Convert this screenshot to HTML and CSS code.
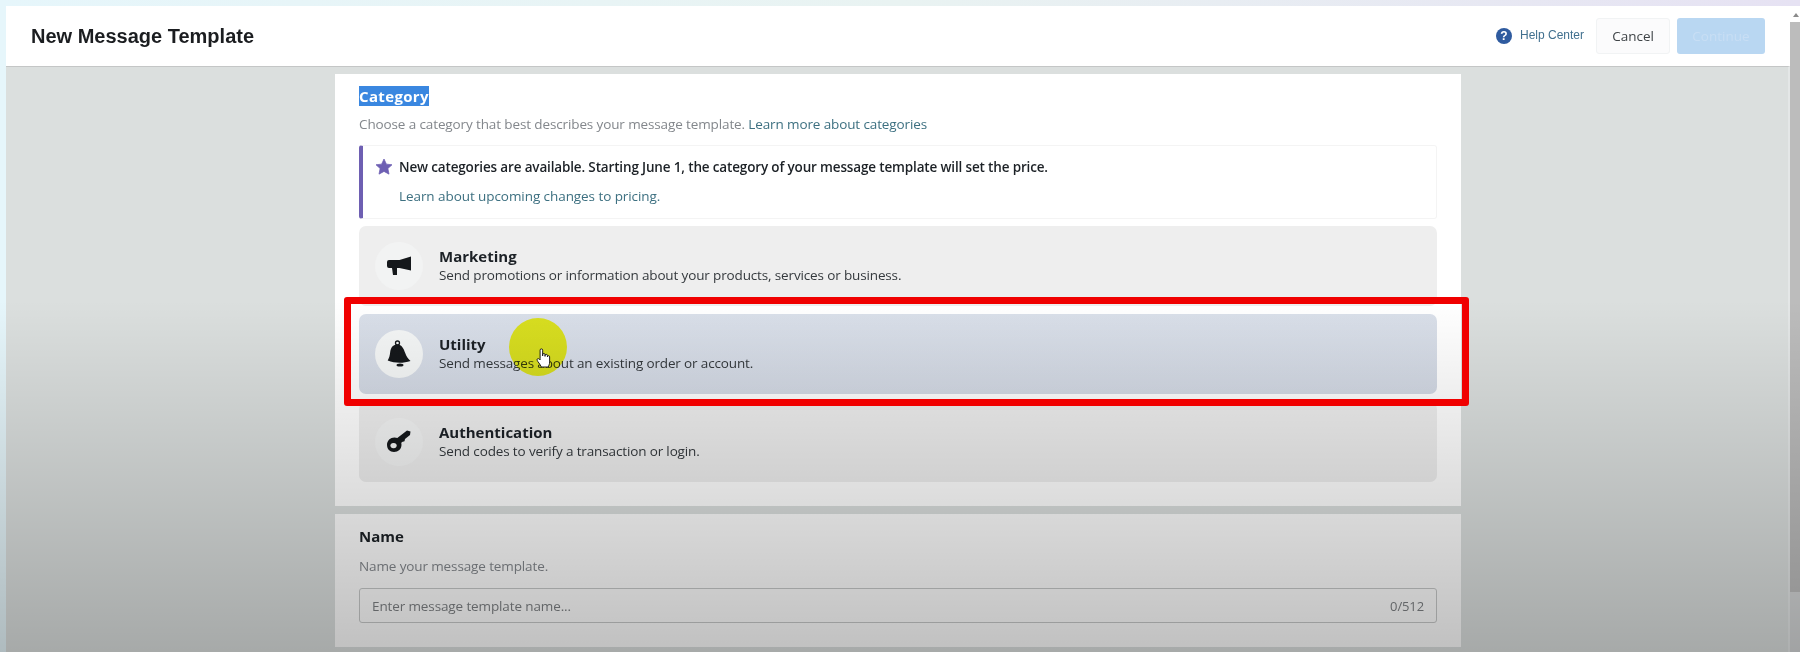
FILE: index.html
```html
<!DOCTYPE html>
<html lang="en">
<head>
<meta charset="utf-8">
<title>New Message Template</title>
<link rel="stylesheet" href="styles.css">
</head>
<body>
<div class="shell">
  <div class="app">
    <header class="header">
      <h1 class="title">New Message Template</h1>
      <div class="actions">
        <a class="help"><span class="help-icon">?</span><span class="help-text">Help Center</span></a>
        <button class="btn btn-cancel">Cancel</button>
        <button class="btn btn-continue">Continue</button>
      </div>
    </header>
    <main class="main">
      <section class="card card-category">
        <h2 class="heading heading-category"><span class="selected">Category</span></h2>
        <p class="sub sub-category">Choose a category that best describes your message template. <a class="link">Learn more about categories</a></p>
        <div class="notice">
          <div class="notice-line">
            <svg class="star" viewBox="0 0 16 16"><path d="M8 1.600l1.900 4.100 4.500.5-3.300 3 .9 4.500L8 11.500l-4 2.200.9-4.500-3.300-3 4.500-.5z"/></svg>
            <span class="notice-text">New categories are available. Starting June 1, the category of your message template will set the price.</span>
          </div>
          <a class="link notice-link">Learn about upcoming changes to pricing.</a>
        </div>
        <div class="options">
          <div class="option">
            <span class="option-icon"><svg viewBox="0 0 48 48"><path d="M14 18h10.500L36 14.500V28.500L24.500 26H14a2 2 0 0 1-2-2v-4a2 2 0 0 1 2-2z"/><path d="M17 26h5v7h-4z"/></svg></span>
            <div class="option-copy"><div class="option-name">Marketing</div><div class="option-desc">Send promotions or information about your products, services or business.</div></div>
          </div>
          <div class="option option-active">
            <span class="option-icon"><svg viewBox="0 0 48 48"><circle class="ring" cx="22.500" cy="13" r="2"/><path d="M22 14.500c-4.500.3-6.300 3.500-6.800 7.500-.4 3.500-1 6-2.500 8.500 7 2.800 15.300 3 22.800.5-2.500-2.500-4-4.500-5.300-8-1.500-4.500-3.500-8.800-8.200-8.500z"/><ellipse cx="25" cy="35" rx="3.500" ry="1.600"/></svg></span>
            <div class="option-copy"><div class="option-name">Utility</div><div class="option-desc">Send messages about an existing order or account.</div></div>
          </div>
          <div class="option">
            <span class="option-icon"><svg viewBox="0 0 48 48"><path fill-rule="evenodd" d="M19.500 19.500c4.200 0 7 3 7 7.300s-3.300 7.200-7.500 7.200-7-3-7-7.200 3.300-7.300 7.500-7.300zM18.500 25a3.200 2.600 0 1 0 .1 0z"/><path d="M21 21L32 12.500l3.500 1-.5 3.500-5 4-.5 2.200-2.500.8-2.500 3z"/></svg></span>
            <div class="option-copy"><div class="option-name">Authentication</div><div class="option-desc">Send codes to verify a transaction or login.</div></div>
          </div>
        </div>
      </section>
      <section class="card card-name">
        <h2 class="heading">Name</h2>
        <p class="sub sub-name">Name your message template.</p>
        <div class="field">
          <span class="placeholder">Enter message template name...</span>
          <span class="counter">0/512</span>
        </div>
      </section>
    </main>
  </div>
  <div class="scrollbar">
    <span class="scroll-arrow"></span>
    <span class="scroll-thumb"></span>
  </div>
</div>
<div class="shade"></div>
<div class="red-box"></div>
<div class="spotlight"></div>
<svg class="hand" viewBox="0 0 20 26"><path d="M6 13V3.200a1.500 1.500 0 0 1 3 0V10v-1.500a1.400 1.400 0 0 1 2.800 0V10.500 9.500a1.400 1.400 0 0 1 2.800 0v1.500a1.300 1.300 0 0 1 2.600 0v6c0 3-1 4-1.600 6H7.500C6.500 20.500 5 19 3.300 16.500c-1.200-2-1-3 0-3.300 1-.2 1.800.4 2.700 1.500z"/></svg>
</body>
</html>
```
FILE: styles.css
```css
* { box-sizing: border-box; }
html, body { margin: 0; height: 652px; overflow: hidden; }
body {
  background: linear-gradient(90deg, #e6f6fb 0%, #e9f3f2 50%, #e6e2f3 100%);
  font-family: "Open Sans", "Noto Sans", sans-serif;
  color: #1c2126;
}
.shell { display: flex; height: 652px; padding: 6px 0 0 6px; }
.app { flex: 1; display: flex; flex-direction: column; min-width: 0; }
.header {
  height: 60px;
  background: #fff;
  display: flex;
  align-items: center;
  justify-content: space-between;
  padding: 0 25px 0 25px;
}
.title {
  margin: 0;
  font: 700 20px/24px "Liberation Sans", Arial, sans-serif;
  color: #1b1d20;
}
.actions { display: flex; align-items: center; }
.help { display: flex; align-items: center; margin-right: 12px; }
.help-icon {
  width: 16px; height: 16px; border-radius: 50%;
  background: #2f5b9f; color: #fff;
  font: 700 12px/16px "Liberation Sans", Arial, sans-serif;
  text-align: center;
  margin-right: 8px;
}
.help-text { font: 12px/16px "Liberation Sans", Arial, sans-serif; color: #41708f; position: relative; top: -1px; }
.btn {
  height: 36px;
  border-radius: 3px;
  font: 13.500px/20px "Open Sans", sans-serif;
  padding: 0;
}
.btn-cancel { width: 74px; background: #fbfbfc; border: 1px solid #f1f3f4; color: #3f4447; margin-right: 7px; }
.btn-continue { width: 88px; background: #b9d7f2; border: 0; color: #c8def4; }
.main {
  flex: 1;
  background: #dbdfde;
  border-top: 1px solid #c4c6c6;
  border-right: 2px solid #e4e7e7;
  padding: 7px 0 0 2px;
  display: flex;
  flex-direction: column;
  align-items: center;
  gap: 8px;
  min-height: 0;
}
.card { width: 1126px; background: #fff; padding: 0 24px; flex: none; }
.card-category { height: 432px; padding-top: 12px; }
.card-name { height: 133px; padding-top: 12px; background: #fdfdfd; }
.heading { margin: 0; font-size: 15px; line-height: 20px; font-weight: 700; color: #1c2126; }
.selected { display: inline-block; background: #3a87e0; color: #fff; height: 20px; letter-spacing: .35px; }
.sub { margin: 0; font-size: 13.500px; line-height: 18px; color: #83878c; letter-spacing: -.12px; }
.sub-category { margin-top: 9px; }
.sub-name { margin-top: 11px; }
.link { color: #3d7081; }
.notice {
  margin-top: 12px;
  height: 74px;
  border: 1px solid #f4f4f4;
  border-left: 4px solid #6e5fb2;
  border-radius: 3px;
  padding: 12px 0 0 12px;
}
.notice-line { display: flex; align-items: center; height: 18px; }
.star { width: 20px; height: 20px; fill: #6d5fb3; stroke: #6d5fb3; stroke-width: .6; stroke-linejoin: round; margin: 0 5px 0 -1px; flex: none; }
.notice-text { font-size: 13.500px; line-height: 18px; font-weight: 600; color: #1c2126; letter-spacing: -.155px; }
.notice-link { display: block; margin: 11px 0 0 24px; font-size: 13.500px; line-height: 18px; letter-spacing: -.07px; }
.options { margin-top: 7px; display: flex; flex-direction: column; gap: 8px; }
.option {
  height: 80px;
  background: #eeeeee;
  border-radius: 7px;
  display: flex;
  align-items: center;
  padding-left: 16px;
}
.option-active { background: linear-gradient(180deg, #d9dfe9, #d3d9e4); }
.option-icon {
  width: 48px; height: 48px; border-radius: 50%;
  background: #f2f3f3;
  margin-right: 16px;
  flex: none;
}
.option-active .option-icon { background: #f4f6f6; }
.option-icon svg { display: block; width: 48px; height: 48px; fill: #15181b; }
.option-icon .ring { fill: none; stroke: #15181b; stroke-width: 1.300; }
.option-copy { margin-top: -1px; }
.option-name { font-size: 15px; line-height: 20px; font-weight: 700; color: #1c2126; }
.option-desc { font-size: 13.500px; line-height: 19px; color: #34393d; letter-spacing: -.14px; }
.field {
  margin-top: 13px;
  height: 35px;
  border: 1px solid #c6c8c8;
  border-radius: 3px;
  display: flex;
  align-items: center;
  justify-content: space-between;
  padding: 0 12px;
  font-size: 13.500px;
  letter-spacing: -.12px;
  color: #7d8083;
}
.counter { font-size: 13px; }
.scrollbar { width: 10px; display: flex; flex-direction: column; background: #d4d6d7; }
.scroll-arrow { height: 16px; background: #fff; position: relative; }
.scroll-arrow::after {
  content: ""; position: absolute; left: 3px; top: 7px;
  border: 3px solid transparent; border-top: 0; border-bottom: 4px solid #8a8a8a;
}
.scroll-thumb { height: 570px; background: #bcbcbc; }
.shade {
  position: absolute; left: 0; top: 0; width: 1800px; height: 652px;
  background: linear-gradient(180deg, rgba(0,0,0,0) 300px, rgba(0,0,0,.24) 652px);
  pointer-events: none;
}
.red-box {
  position: absolute; left: 344px; top: 297px; width: 1125px; height: 109px;
  border: 7px solid #f00000; border-radius: 3px;
}
.spotlight {
  position: absolute; left: 509px; top: 318px; width: 58px; height: 58px;
  border-radius: 50%; background: #ffff22;
  mix-blend-mode: multiply;
}
.hand {
  position: absolute; left: 535px; top: 346px; width: 17px; height: 25px;
  fill: #fff; stroke: #111; stroke-width: 1.100;
}
```
